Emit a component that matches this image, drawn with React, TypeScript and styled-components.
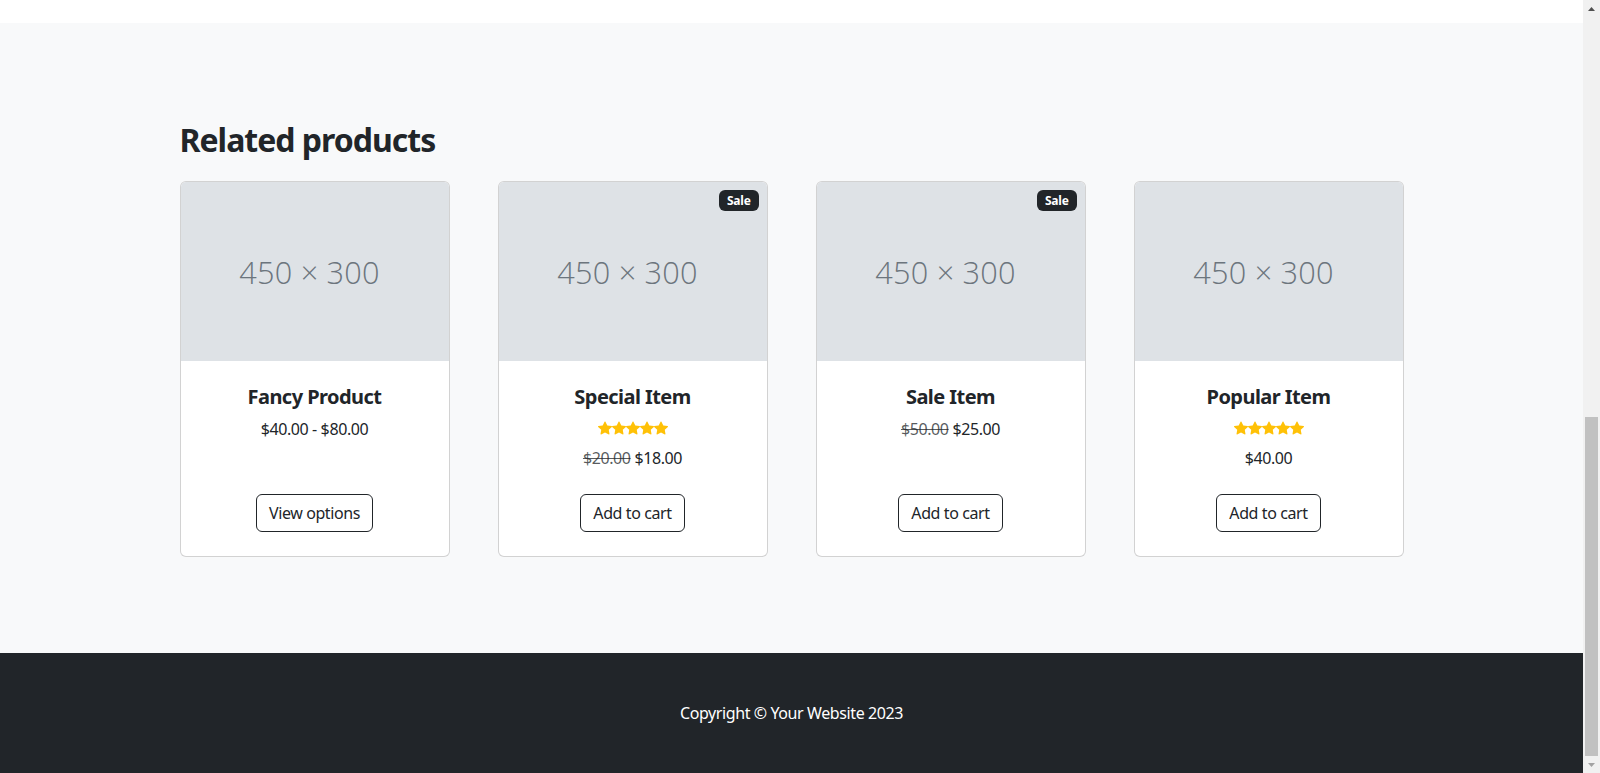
import React from "react";
import styled, { createGlobalStyle } from "styled-components";

const Global = createGlobalStyle`
  html, body { height: 100%; }
  body {
    margin: 0;
    overflow: hidden;
    font-family: "Segoe UI", "Noto Sans", "Open Sans", sans-serif;
    font-size: 16px;
    line-height: 1.5;
    letter-spacing: -0.4px;
    color: #212529;
    background: #fff;
  }
  * { box-sizing: border-box; }
`;

const Window = styled.div`
  display: flex;
  height: 773px;
  width: 100%;
`;

const Viewport = styled.main`
  flex: 1 1 auto;
  min-width: 0;
  display: flex;
  flex-direction: column;
  justify-content: flex-end;
  overflow: hidden;
`;

const ScrollBar = styled.div`
  flex: 0 0 17px;
  display: flex;
  flex-direction: column;
  background: #f1f1f1;
`;

const ScrollButton = styled.div`
  flex: 0 0 17px;
  display: flex;
  align-items: center;
  justify-content: center;
`;

const ScrollTrack = styled.div`
  flex: 1 1 auto;
  display: flex;
  flex-direction: column;
  justify-content: flex-end;
  padding: 0 2px;
`;

const ScrollThumb = styled.div<{ $size: number }>`
  height: ${(p) => p.$size}px;
  background: #c1c1c1;
`;

const Container = styled.div`
  width: 100%;
  max-width: 1320px;
  margin: 0 auto;
  padding: 0 48px;
`;

const ProductSection = styled.section`
  flex: 0 0 935px;
  background: #fff;
`;

const RelatedSection = styled.section`
  flex: 0 0 auto;
  background: #f8f9fa;
  padding: 48px 0;
`;

const RelatedInner = styled(Container)`
  margin: 48px auto;
`;

const Heading = styled.h2`
  font-size: 32px;
  font-weight: 700;
  line-height: 1.2;
  letter-spacing: -1px;
  margin: 0 0 24px;
  padding-top: 2px;
  height: 38.4px;
`;

const Grid = styled.div`
  display: grid;
  grid-template-columns: repeat(4, 1fr);
  column-gap: 48px;
`;

const Card = styled.div`
  position: relative;
  display: flex;
  flex-direction: column;
  height: 100%;
  background: #fff;
  border: 1px solid rgba(0, 0, 0, 0.175);
  border-radius: 6px;
  overflow: hidden;
`;

const Badge = styled.span`
  position: absolute;
  top: 8px;
  right: 8px;
  background: #212529;
  color: #fff;
  font-size: 12px;
  font-weight: 700;
  line-height: 1;
  letter-spacing: -0.2px;
  padding: 4.2px 7.8px;
  border-radius: 6px;
`;

const Placeholder = styled.div`
  aspect-ratio: 3 / 2;
  background: #dee2e6;
  color: #6c757d;
  display: flex;
  align-items: center;
  justify-content: center;
  padding-right: 10px;
  font-family: "Open Sans", "Noto Sans", sans-serif;
  font-weight: 300;
  font-size: 30.7px;
  letter-spacing: 0.2px;
`;

const Body = styled.div`
  padding: 24px;
  text-align: center;
  flex: 1 1 auto;
`;

const Title = styled.h5`
  font-size: 20px;
  font-weight: 700;
  line-height: 1.2;
  letter-spacing: -0.55px;
  margin: 0 0 8px;
`;

const Stars = styled.div`
  display: flex;
  justify-content: center;
  color: #ffc107;
  line-height: 21px;
  height: 21px;
  align-items: center;
  margin-bottom: 8px;
`;

const Price = styled.div``;

const Old = styled.span`
  color: rgba(33, 37, 41, 0.75);
  text-decoration: line-through;
`;

const Footer = styled.div`
  padding: 0 24px 24px;
  text-align: center;
`;

const Button = styled.a`
  display: inline-block;
  padding: 6px 12px;
  border: 1px solid #212529;
  border-radius: 6px;
  color: #212529;
  font-size: 16px;
  line-height: 1.5;
  text-decoration: none;
`;

const SiteFooter = styled.footer`
  flex: 0 0 auto;
  background: #212529;
  padding: 48px 0;
  color: #fff;
  text-align: center;
`;

const Copy = styled.p`
  margin: 0;
`;

const Star = () => (
  <svg width="14" height="14" viewBox="0 0 16 16" fill="currentColor">
    <path d="M3.612 15.443c-.386.198-.824-.149-.746-.592l.83-4.730L.173 6.765c-.329-.314-.158-.888.283-.95l4.898-.696L7.538.792c.197-.39.73-.39.927 0l2.184 4.327 4.898.696c.441.062.612.636.282.95l-3.522 3.356.83 4.73c.078.443-.36.79-.746.592L8 13.187l-4.389 2.256z" />
  </svg>
);

const Arrow = ({ up, color }: { up?: boolean; color: string }) => (
  <svg width="7" height="4" viewBox="0 0 7 4">
    <polygon points={up ? "3.5,0 7,4 0,4" : "0,0 7,0 3.5,4"} fill={color} />
  </svg>
);

type Product = {
  name: string;
  sale?: boolean;
  stars?: boolean;
  old?: string;
  price: string;
  action: string;
};

const products: Product[] = [
  { name: "Fancy Product", price: "$40.00 - $80.00", action: "View options" },
  { name: "Special Item", sale: true, stars: true, old: "$20.00", price: "$18.00", action: "Add to cart" },
  { name: "Sale Item", sale: true, old: "$50.00", price: "$25.00", action: "Add to cart" },
  { name: "Popular Item", stars: true, price: "$40.00", action: "Add to cart" },
];

export default function App() {
  return (
    <>
      <Global />
      <Window>
        <Viewport>
          <ProductSection />
          <RelatedSection>
            <RelatedInner>
              <Heading>Related products</Heading>
              <Grid>
                {products.map((p) => (
                  <Card key={p.name}>
                    {p.sale && <Badge>Sale</Badge>}
                    <Placeholder>450 × 300</Placeholder>
                    <Body>
                      <Title>{p.name}</Title>
                      {p.stars && (
                        <Stars>
                          <Star />
                          <Star />
                          <Star />
                          <Star />
                          <Star />
                        </Stars>
                      )}
                      <Price>
                        {p.old && <Old>{p.old}</Old>}
                        {p.old && " "}
                        {p.price}
                      </Price>
                    </Body>
                    <Footer>
                      <Button href="#">{p.action}</Button>
                    </Footer>
                  </Card>
                ))}
              </Grid>
            </RelatedInner>
          </RelatedSection>
          <SiteFooter>
            <Copy>Copyright © Your Website 2023</Copy>
          </SiteFooter>
        </Viewport>
        <ScrollBar>
          <ScrollButton>
            <Arrow up color="#505050" />
          </ScrollButton>
          <ScrollTrack>
            <ScrollThumb $size={339} />
          </ScrollTrack>
          <ScrollButton>
            <Arrow color="#a3a3a3" />
          </ScrollButton>
        </ScrollBar>
      </Window>
    </>
  );
}
